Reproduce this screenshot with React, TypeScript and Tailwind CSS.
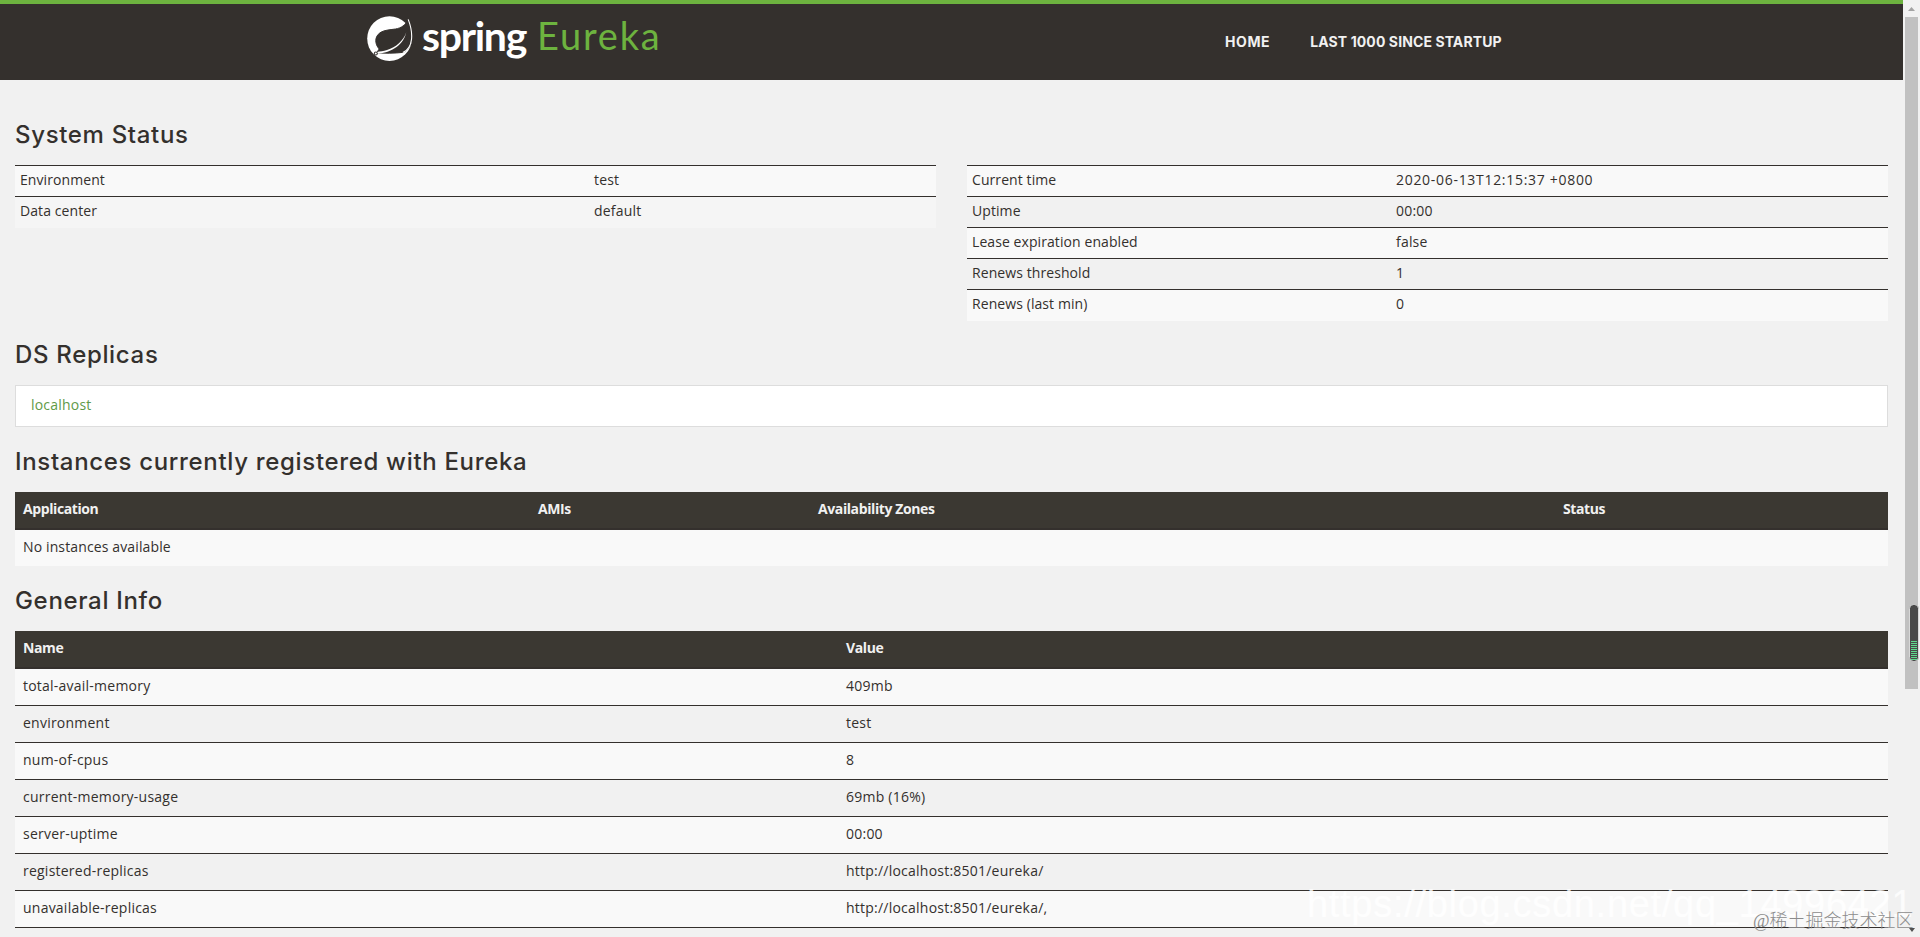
import { clsx } from "clsx";

const environmentRows = [
  ["Environment", "test"],
  ["Data center", "default"],
];

const statusRows = [
  ["Current time", "2020-06-13T12:15:37 +0800"],
  ["Uptime", "00:00"],
  ["Lease expiration enabled", "false"],
  ["Renews threshold", "1"],
  ["Renews (last min)", "0"],
];

const generalInfo = [
  ["total-avail-memory", "409mb"],
  ["environment", "test"],
  ["num-of-cpus", "8"],
  ["current-memory-usage", "69mb (16%)"],
  ["server-uptime", "00:00"],
  ["registered-replicas", "http://localhost:8501/eureka/"],
  ["unavailable-replicas", "http://localhost:8501/eureka/,"],
];

function SpringLogo() {
  return (
    <svg className="w-[46px] h-[46px] shrink-0" viewBox="0 0 46 46">
      <circle cx="22.5" cy="22.6" r="22.3" fill="#fff" />
      {/* Leaf */}
      <path
        d="M41.200 3.400C38.500 9 34.500 12 28.500 13c-6 .9-11.500 1-15.500 3.800-5.500 3.900-5.500 11-.8 16.200L9.500 36.800c8.500.6 18 .6 26.300-.4C45.500 33 47.500 19 41.200 3.400z"
        fill="#34302d"
        stroke="#34302d"
        strokeWidth="1"
      />
      <path d="M41.200 3.400C46.500 17 46.500 32 35.800 36.600" fill="none" stroke="#fff" strokeWidth="1.100" />
      {/* Vein */}
      <path d="M39.200 16.500C36.500 24.500 29 31.300 20 34c-3.500 1-7 1.500-10 2l-.3 1.900C22 36.700 35.500 31.500 39.200 16.500z" fill="#fff" />
      <circle cx="8.800" cy="37.500" r="2" fill="#34302d" />
      <circle cx="8.800" cy="37.500" r="1" fill="#fff" />
    </svg>
  );
}

function Header() {
  return (
    <header className="h-20 w-[1903px] border-t-4 border-[#6db33f] bg-[#34302d] flex items-start">
      <div className="flex items-start w-[858px] pl-[367px] pt-3 box-content shrink-0 font-['Lato']">
        <SpringLogo />
        <span className="ml-[9px] -mt-[6px] text-[41px] leading-[52px] font-bold tracking-[-1.3px] text-white">
          spring
        </span>
        <span className="ml-[11px] -mt-[7px] text-[38px] leading-[52px] tracking-[1.8px] text-[#6db33f]">
          Eureka
        </span>
      </div>
      <nav className="flex gap-10 pt-[27px] text-[14px] leading-[22px] font-bold text-[#f1f1f1] font-['Inter'] whitespace-nowrap">
        <a href="#home" className="tracking-[0.6px]">HOME</a>
        <a href="#lastn" className="tracking-[0.1px]">LAST 1000 SINCE STARTUP</a>
      </nav>
    </header>
  );
}

function Heading({ children }: { children: string }) {
  return (
    <h1 className="text-[24px] leading-[26px] font-medium tracking-[0.67px] text-[#34302d] font-['Inter'] whitespace-nowrap">
      {children}
    </h1>
  );
}

function StatusTable({ rows, first }: { rows: string[][]; first: string }) {
  return (
    <table className="w-[921px] table-fixed border-collapse">
      <colgroup>
        <col className={first} />
        <col />
      </colgroup>
      <tbody>
        {rows.map(([name, value], i) => (
          <tr
            key={name}
            className={clsx(
              "h-[31px] border-t border-[#34302d]",
              i % 2 === 0 ? "bg-[#f9f9f9]" : rows.length === 2 ? "bg-[#f5f5f5]" : "bg-[#f1f1f1]"
            )}
          >
            <td className="px-[5px] pb-[2px] leading-5 tracking-[0.08px]">{name}</td>
            <td
              className={clsx(
                "px-[5px] pb-[2px] leading-5",
                value.length > 10 ? "tracking-[0.7px]" : "tracking-[0.2px]"
              )}
            >
              {value}
            </td>
          </tr>
        ))}
      </tbody>
    </table>
  );
}

const headRow =
  "flex h-[38px] items-center bg-[#3b3832] border-b-2 border-[#34302d] pl-2 pb-[2px] text-[14px] font-bold tracking-[-0.4px] text-[#f1f1f1]";

function Scrollbar() {
  return (
    <div className="absolute right-0 top-0 h-[937px] w-[17px] bg-[#f1f1f1] flex flex-col items-center">
      <svg className="h-[17px] w-[17px]" viewBox="0 0 17 17">
        <path d="M5 11h7L8.500 7z" fill="#a3a3a3" />
      </svg>
      <div className="h-[672px] w-[13px] bg-[#c1c1c1]" />
      <div className="flex-1" />
      <svg className="h-[17px] w-[17px]" viewBox="0 0 17 17">
        <path d="M6 8h6L9 12z" fill="#505050" />
      </svg>
      {/* Memory meter floating over the scrollbar */}
      <svg className="absolute left-[6px] top-[604px] h-[59px] w-[11px]" viewBox="0 0 11 59">
        <rect x=".5" y=".5" width="9" height="57" rx="4" fill="#4a4a4a" stroke="#d8d8d8" />
        {[0, 1, 2, 3, 4, 5, 6, 7, 8, 9].map((i) => (
          <rect key={i} x="2" y={37 + i * 2} width="6" height="1" fill="#5fdc8c" />
        ))}
      </svg>
    </div>
  );
}

export default function App() {
  return (
    <div className="relative h-[937px] w-[1920px] overflow-hidden bg-[#f1f1f1] text-[14px] leading-5 text-[#34302d] font-['Open_Sans',sans-serif]">
      <Header />
      <main className="w-[1903px] px-[15px] pt-[42px]">
        <Heading>System Status</Heading>
        <div className="mt-[17px] flex h-[156px] items-start gap-[31px]">
          <StatusTable rows={environmentRows} first="w-[574px]" />
          <StatusTable rows={statusRows} first="w-[424px]" />
        </div>

        <div className="mt-[21px]">
          <Heading>DS Replicas</Heading>
        </div>
        <div className="mt-[17px] flex h-[42px] items-center border border-[#dddddd] bg-white px-[15px] pb-[2px]">
          <a href="#localhost" className="tracking-[0.2px] text-[#5f9a48]">
            localhost
          </a>
        </div>

        <div className="mt-[22px]">
          <Heading>Instances currently registered with Eureka</Heading>
        </div>
        <div className={clsx(headRow, "mt-[17px]")}>
          <span className="w-[515px]">Application</span>
          <span className="w-[280px]">AMIs</span>
          <span className="w-[745px]">Availability Zones</span>
          <span>Status</span>
        </div>
        <div className="flex h-9 items-center bg-[#f9f9f9] pl-2 pb-[2px] tracking-[0.13px]">
          No instances available
        </div>

        <div className="mt-[22px]">
          <Heading>General Info</Heading>
        </div>
        <div className={clsx(headRow, "mt-[17px]")}>
          <span className="w-[823px]">Name</span>
          <span>Value</span>
        </div>
        {generalInfo.map(([name, value], i) => (
          <div
            key={name}
            className={clsx(
              "flex h-[37px] items-center border-b border-[#34302d] pl-2 pb-[2px] tracking-[0.23px]",
              i % 2 === 0 ? "bg-[#f9f9f9]" : "bg-[#f1f1f1]"
            )}
          >
            <span className="w-[823px]">{name}</span>
            <span>{value}</span>
          </div>
        ))}
      </main>

      <Scrollbar />

      <div className="absolute left-[1307px] top-[881px] text-[38px] leading-[46px] tracking-[0.7px] text-white/80 whitespace-nowrap font-['Liberation_Sans']">
        https://blog.csdn.net/qq_14996421
      </div>
      <div className="absolute left-[1753px] top-[910px] text-[18px] leading-[22px] font-light text-[#8c8c8c] whitespace-nowrap font-['Liberation_Serif','Noto_Sans_CJK_SC',sans-serif]">
        @稀土掘金技术社区
      </div>
    </div>
  );
}
